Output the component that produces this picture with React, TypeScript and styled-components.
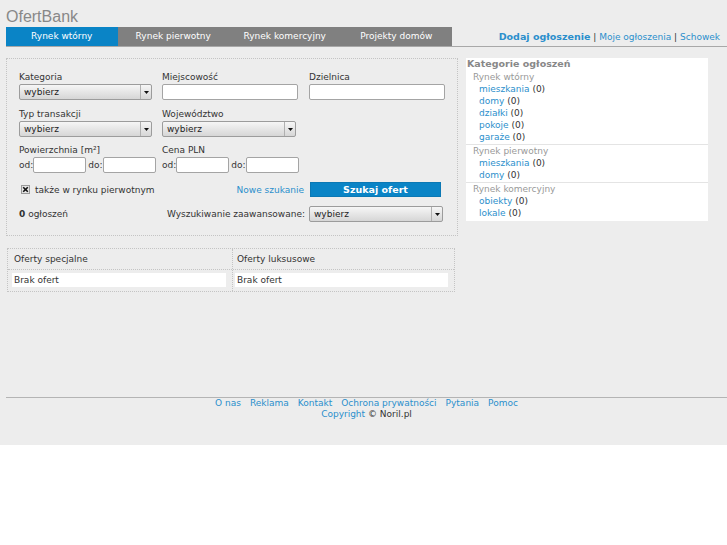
import React from "react";
import styled, { createGlobalStyle } from "styled-components";

const blue = "#0a84c6";
const linkBlue = "#2b8fcc";

const GlobalStyle = createGlobalStyle`
  html, body {
    margin: 0;
    padding: 0;
    background: #fff;
  }
  body {
    font-family: "DejaVu Sans", Verdana, sans-serif;
    font-size: 9px;
    color: #333;
  }
`;

const Page = styled.div`
  background: #ededed;
  padding-left: 6px;
`;

const Logo = styled.div`
  box-sizing: border-box;
  height: 27px;
  padding-top: 8px;
  font: 16px/18px "Liberation Sans", Arial, sans-serif;
  color: #888;
`;

const Header = styled.div`
  display: flex;
  justify-content: space-between;
  border-bottom: 1px solid #a8a8a8;
  height: 19px;
`;

const Tabs = styled.div`
  display: grid;
  grid-template-columns: repeat(4, 111.5px);
`;

const Tab = styled.div<{ $active?: boolean }>`
  background: ${(p) => (p.$active ? blue : "#808080")};
  color: #fff;
  text-align: center;
  line-height: 19px;
`;

const TopLinks = styled.div`
  padding-right: 7px;
  line-height: 19px;
  color: #333;
`;

const Link = styled.a<{ $bold?: boolean }>`
  color: ${linkBlue};
  text-decoration: none;
  font-weight: ${(p) => (p.$bold ? "bold" : "normal")};
  font-size: ${(p) => (p.$bold ? "9.5px" : "inherit")};
`;

const Content = styled.div`
  box-sizing: border-box;
  display: flex;
  gap: 8px;
  height: 350px;
  padding-top: 11px;
`;

const LeftCol = styled.div`
  width: 452px;
`;

const SearchPanel = styled.div`
  border: 1px dotted #c4c4c4;
  padding: 11px 0 13px 12px;
`;

const Row = styled.div<{ $mt?: number }>`
  display: grid;
  grid-template-columns: 143px 147px 136px;
  margin-top: ${(p) => p.$mt ?? 0}px;
  align-items: center;
`;

const Field = styled.div`
  display: flex;
  flex-direction: column;
`;

const Label = styled.label`
  line-height: 14px;
  height: 14px;
`;

const SelectBox = styled.div<{ $w: number }>`
  box-sizing: border-box;
  display: flex;
  width: ${(p) => p.$w}px;
  height: 16px;
  border: 1px solid #9c9c9c;
  border-radius: 2px;
  background: linear-gradient(#f6f6f6, #d6d6d6);
  color: #222;
`;

const SelectValue = styled.span`
  flex: 1;
  padding-left: 4px;
  line-height: 14px;
`;

const SelectArrow = styled.span`
  width: 10px;
  border-left: 1px solid #b0b0b0;
  display: flex;
  align-items: center;
  justify-content: center;
`;

const TextInput = styled.input<{ $w: number }>`
  box-sizing: border-box;
  width: ${(p) => p.$w}px;
  height: 16px;
  margin: 0;
  padding: 0 3px;
  border: 1px solid #a4a4a4;
  border-radius: 2px;
  background: #fff;
  font: inherit;
`;

const Range = styled.div`
  display: flex;
  align-items: center;
`;

const RangeLabel = styled.span`
  margin-left: 2px;
  &:first-child {
    margin-left: 0;
  }
`;

const Actions = styled.div`
  display: flex;
  align-items: center;
  height: 15px;
  margin-top: 9px;
  padding-right: 16px;
`;

const Check = styled.label`
  display: flex;
  align-items: center;
  gap: 5px;
  padding-left: 2px;
  flex: 1;
`;

const NewSearch = styled(Link)`
  margin-right: 6px;
`;

const Button = styled.button`
  box-sizing: border-box;
  width: 131px;
  height: 15px;
  margin: 0;
  padding: 0;
  border: 1px solid #0b78b4;
  background: ${blue};
  color: #fff;
  font: bold 9.5px "DejaVu Sans", Verdana, sans-serif;
  line-height: 13px;
`;

const Summary = styled.div`
  display: flex;
  align-items: center;
  margin-top: 9px;
  padding-right: 14px;
`;

const Count = styled.span`
  flex: 1;
`;

const Advanced = styled.span`
  margin-right: 4px;
`;

const Offers = styled.div`
  display: grid;
  grid-template-columns: 224px 1fr;
  width: 448px;
  margin: 12px 0 0 1px;
  border: 1px dotted #c4c4c4;
  box-sizing: border-box;
`;

const OfferCol = styled.div<{ $inset: number }>`
  --inset: ${(p) => p.$inset}px;
  & + & {
    border-left: 1px dotted #c4c4c4;
  }
`;

const OfferHead = styled.div`
  height: 20px;
  line-height: 20px;
  padding-left: calc(var(--inset) + 2px);
  border-bottom: 1px dotted #c4c4c4;
`;

const OfferBody = styled.div`
  padding: 3px 6px 4px var(--inset);
`;

const OfferCell = styled.div`
  background: #fff;
  height: 14px;
  line-height: 14px;
  padding-left: 2px;
`;

const Sidebar = styled.div`
  width: 242px;
  align-self: flex-start;
  background: #fff;
  padding-bottom: 1px;
`;

const SideTitle = styled.div`
  line-height: 12px;
  padding-left: 1px;
  font-weight: bold;
  font-size: 9.5px;
  color: #888;
`;

const Group = styled.div`
  padding: 1px 0 1px;
  & + & {
    border-top: 1px solid #e4e4e4;
    padding-top: 0;
  }
`;

const GroupName = styled.div`
  line-height: 12px;
  padding-left: 7px;
  color: #999;
`;

const Item = styled.div`
  line-height: 12px;
  padding-left: 13px;
`;

const Footer = styled.div`
  border-top: 1px solid #b4b4b4;
  padding-bottom: 25px;
  text-align: center;
  line-height: 11px;
`;

const FooterLinks = styled.div`
  display: flex;
  justify-content: center;
  gap: 9px;
`;

function Select({ w }: { w: number }) {
  return (
    <SelectBox $w={w}>
      <SelectValue>wybierz</SelectValue>
      <SelectArrow>
        <svg width="5" height="3" viewBox="0 0 5 3">
          <path d="M0 0h5L2.5 3z" fill="#111" />
        </svg>
      </SelectArrow>
    </SelectBox>
  );
}

const groups = [
  { name: "Rynek wtórny", items: ["mieszkania", "domy", "działki", "pokoje", "garaże"] },
  { name: "Rynek pierwotny", items: ["mieszkania", "domy"] },
  { name: "Rynek komercyjny", items: ["obiekty", "lokale"] },
];

const tabs = ["Rynek wtórny", "Rynek pierwotny", "Rynek komercyjny", "Projekty domów"];

const footerLinks = ["O nas", "Reklama", "Kontakt", "Ochrona prywatności", "Pytania", "Pomoc"];

const offers = [
  { title: "Oferty specjalne", inset: 4 },
  { title: "Oferty luksusowe", inset: 2 },
];

export default function App() {
  return (
    <Page>
      <GlobalStyle />
      <Logo>OfertBank</Logo>
      <Header>
        <Tabs>
          {tabs.map((t, i) => (
            <Tab key={t} $active={i === 0}>{t}</Tab>
          ))}
        </Tabs>
        <TopLinks>
          <Link $bold>Dodaj ogłoszenie</Link> | <Link>Moje ogłoszenia</Link> | <Link>Schowek</Link>
        </TopLinks>
      </Header>

      <Content>
        <LeftCol>
          <SearchPanel>
            <Row>
              <Field>
                <Label>Kategoria</Label>
                <Select w={133} />
              </Field>
              <Field>
                <Label>Miejscowość</Label>
                <TextInput $w={136} />
              </Field>
              <Field>
                <Label>Dzielnica</Label>
                <TextInput $w={136} />
              </Field>
            </Row>
            <Row $mt={7}>
              <Field>
                <Label>Typ transakcji</Label>
                <Select w={133} />
              </Field>
              <Field>
                <Label>Województwo</Label>
                <Select w={134} />
              </Field>
            </Row>
            <Row $mt={6}>
              <Field>
                <Label>Powierzchnia [m²]</Label>
                <Range>
                  <RangeLabel>od:</RangeLabel>
                  <TextInput $w={53} />
                  <RangeLabel>do:</RangeLabel>
                  <TextInput $w={53} />
                </Range>
              </Field>
              <Field>
                <Label>Cena PLN</Label>
                <Range>
                  <RangeLabel>od:</RangeLabel>
                  <TextInput $w={53} />
                  <RangeLabel>do:</RangeLabel>
                  <TextInput $w={53} />
                </Range>
              </Field>
            </Row>
            <Actions>
              <Check>
                <svg width="9" height="9" viewBox="0 0 9 9">
                  <rect x="0.5" y="0.5" width="8" height="8" fill="#e4e4e4" stroke="#9a9a9a" />
                  <path d="M2.2 2.2l4.6 4.6M6.8 2.2l-4.6 4.6" stroke="#111" strokeWidth="1.6" />
                </svg>
                także w rynku pierwotnym
              </Check>
              <NewSearch>Nowe szukanie</NewSearch>
              <Button>Szukaj ofert</Button>
            </Actions>
            <Summary>
              <Count>
                <b>0</b> ogłoszeń
              </Count>
              <Advanced>Wyszukiwanie zaawansowane:</Advanced>
              <Select w={134} />
            </Summary>
          </SearchPanel>

          <Offers>
            {offers.map((o) => (
              <OfferCol key={o.title} $inset={o.inset}>
                <OfferHead>{o.title}</OfferHead>
                <OfferBody>
                  <OfferCell>Brak ofert</OfferCell>
                </OfferBody>
              </OfferCol>
            ))}
          </Offers>
        </LeftCol>

        <Sidebar>
          <SideTitle>Kategorie ogłoszeń</SideTitle>
          {groups.map((g) => (
            <Group key={g.name}>
              <GroupName>{g.name}</GroupName>
              {g.items.map((it) => (
                <Item key={it}>
                  <Link>{it}</Link> (0)
                </Item>
              ))}
            </Group>
          ))}
        </Sidebar>
      </Content>

      <Footer>
        <FooterLinks>
          {footerLinks.map((l) => (
            <Link key={l}>{l}</Link>
          ))}
        </FooterLinks>
        <div>
          <Link>Copyright</Link> © Noril.pl
        </div>
      </Footer>
    </Page>
  );
}
